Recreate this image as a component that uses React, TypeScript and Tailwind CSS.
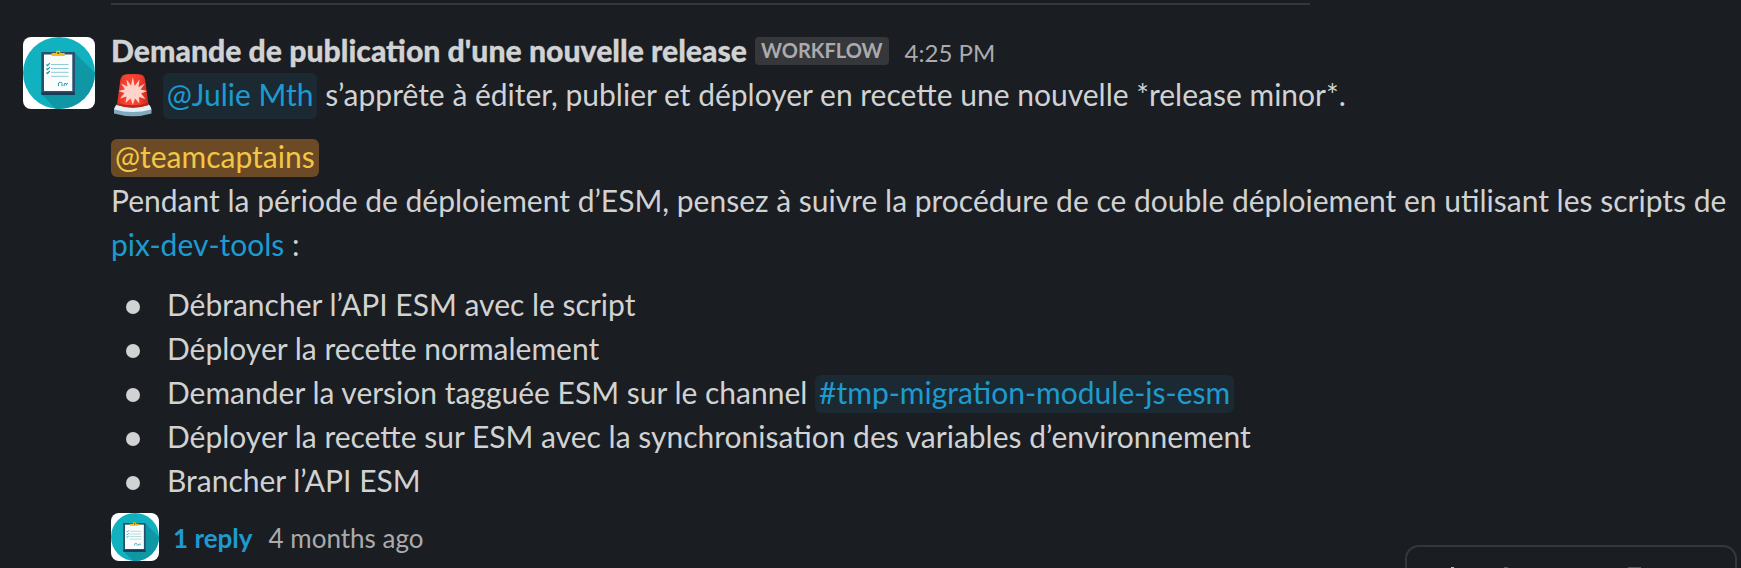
import React from "react";

function ClipboardAvatar({ className }: { className: string }) {
  return (
    <svg viewBox="0 0 72 72" className={className} aria-hidden="true">
      <rect width="72" height="72" fill="#fff" />
      <circle cx="36" cy="36" r="36" fill="#12b1c0" />
      <path d="M52 16 L71.9 35.8 A36 36 0 0 1 36 72 Q34 72 32.5 71.7 L19 57.5Z" fill="#0f97a5" />
      <rect x="18.3" y="15" width="33.7" height="43" rx="1" fill="#25506e" />
      <path d="M18.3 55.5H52V57a1 1 0 0 1-1 1H19.3a1 1 0 0 1-1-1Z" fill="#183a54" />
      <rect x="21" y="17.5" width="28.3" height="36.5" fill="#fbfdfd" />
      <path d="M28.700 16H32.800a2.400 2.400 0 0 1 4.800 0H41.700V19H28.700Z" fill="#f6bb16" />
      <circle cx="35.200" cy="16" r="1.100" fill="#25597b" />
      <g stroke="#8fcbd7" strokeWidth="1">
        <path d="M28 27.500H45.500M28 31.500H45.500M28 35.300H45.500M28 39.300H45.500" />
      </g>
      <g stroke="#179db0" strokeWidth="1.200" fill="none">
        <path d="M23.500 27.500l1 1.200 2.300-2.500M23.500 31.500l1 1.200 2.300-2.500M23.500 35.300l1 1.200 2.300-2.500" />
        <path d="M35.500 49V46q2-1.500 3.500 0M39 49v-2.500M41 49l.5-2.500h1.500M43 48.500l1-2h1" strokeWidth="1" />
      </g>
    </svg>
  );
}

function SirenEmoji() {
  return (
    <svg viewBox="0 0 44 44" className="inline-block h-[44px] w-[44px] align-[-11px]" role="img">
      <defs>
        <linearGradient id="dome" x1="0" x2="1">
          <stop offset="0" stopColor="#e0301f" />
          <stop offset="0.300" stopColor="#fb4434" />
          <stop offset="0.700" stopColor="#f63d2e" />
          <stop offset="1" stopColor="#c92a1c" />
        </linearGradient>
      </defs>
      <path d="M3 36 L5.500 31.500 Q22 29 38 31.500 L40.500 36 V40.500 Q22 46 3 40.500Z" fill="#81a9bd" />
      <path d="M3.200 36.500 Q4 32 7 31.500 H37 Q39.500 32 40.300 36.500 Q22 41.500 3.200 36.500Z" fill="#e6eff4" />
      <path d="M6 32 L9.300 7 Q10 1.500 16 1.200 Q22 .6 28 1.200 Q33.500 1.500 34.200 7 L37.500 32 Q22 37.500 6 32Z" fill="url(#dome)" />
      <path d="M6 32 L6.300 30 Q22 34.500 37.200 30 L37.500 32 Q22 37.500 6 32Z" fill="#b8281c" />
      <path
        d="M21.800 4 L23.700 13 L28.500 6.500 L27.500 14.200 L34 10.500 L29.500 16.500 L36 18 L30 20.500 L34.500 26 L28 24 L28.300 30.500 L24 25.500 L21.800 32 L19.500 25.500 L14.500 30 L15.500 23.500 L9 25.500 L13.500 20 L7.500 18 L14 16.200 L10 10.500 L16.500 13.500 L15.500 6.500 L20 12.500Z"
        fill="#ffd3c8"
      />
    </svg>
  );
}

const steps: React.ReactNode[] = [
  "Débrancher l’API ESM avec le script",
  "Déployer la recette normalement",
  <>
    Demander la version tagguée ESM sur le channel{" "}
    <a className="inline-block h-[38px] rounded-[6px] bg-[#1b2a32] px-[4px] leading-[34px] text-[#1d9bd1]">
      #tmp-migration-module-js-esm
    </a>
  </>,
  "Déployer la recette sur ESM avec la synchronisation des variables d’environnement",
  "Brancher l’API ESM",
];

export default function App() {
  return (
    <main className="relative h-[568px] w-full overflow-hidden bg-[#1a1d21] pt-[3px] font-['Lato',sans-serif] text-[30px] leading-[44px] text-[#d1d2d3]">
      <div className="ml-[111px] h-[2px] w-[1199px] bg-[#35373b]" />
      <article className="mt-[23px] flex gap-4 pl-[23px]">
        <ClipboardAvatar className="mt-[9px] size-[72px] shrink-0 rounded-[8px]" />
        <div className="min-w-0 flex-1">
          <header className="flex h-[44px] items-baseline whitespace-nowrap">
            <h1 className="text-[30.2px] font-black [-webkit-text-stroke:0.3px_#d1d2d3]">
              Demande de publication d'une nouvelle release
            </h1>
            <span className="relative -top-[4px] ml-[8px] h-[28px] rounded-[4px] bg-[#35373b] px-[6px] text-[20px] font-bold leading-[26px] text-[#ababad]">
              WORKFLOW
            </span>
            <time className="ml-[16px] text-[24px] text-[#ababad]">4:25 PM</time>
          </header>
          <p className="h-[46px] whitespace-nowrap">
            <SirenEmoji />{" "}
            <a className="inline-block h-[46px] rounded-[6px] bg-[#1b2a32] px-[4px] leading-[42px] text-[#1d9bd1]">
              @Julie Mth
            </a>{" "}
            s’apprête à éditer, publier et déployer en recette une nouvelle *release minor*.
          </p>
          <div className="mt-4">
            <p className="h-[44px]">
              <a className="inline-block h-[38px] rounded-[6px] bg-[#6c4a26] px-[4px] leading-[34px] text-[#f2c744]">
                @teamcaptains
              </a>
            </p>
            <p className="whitespace-nowrap">
              Pendant la période de déploiement d’ESM, pensez à suivre la procédure de ce double déploiement en utilisant les scripts de
              <br />
              <a className="text-[#1d9bd1]">pix-dev-tools</a> :
            </p>
          </div>
          <ul className="mt-4">
            {steps.map((step, i) => (
              <li key={i} className="flex h-[44px] items-center whitespace-nowrap">
                <span className="mt-[6px] mr-[27px] ml-[15px] size-[14px] shrink-0 rounded-full bg-[#d1d2d3]" />
                <span className="h-[44px]">{step}</span>
              </li>
            ))}
          </ul>
          <footer className="mt-[11px] flex h-[48px] items-center text-[26px]">
            <ClipboardAvatar className="size-[48px] rounded-[8px]" />
            <a className="mt-[2px] ml-[14px] font-bold text-[#1d9bd1]">1 reply</a>
            <span className="mt-[2px] ml-[16px] text-[#ababad]">4 months ago</span>
          </footer>
        </div>
      </article>
      <div className="absolute top-[545px] left-[1405px] flex h-[60px] w-[332px] rounded-[14px] border-2 border-[#35373b] bg-[#1a1d21] pt-[20px]">
        <span className="ml-[44px] h-[2px] w-[3px] bg-[#b9babb]" />
        <span className="ml-[50px] h-[2px] w-[4px] bg-[#55575a]" />
        <span className="ml-[120px] h-[2px] w-[13px] bg-[#55575a]" />
      </div>
    </main>
  );
}
